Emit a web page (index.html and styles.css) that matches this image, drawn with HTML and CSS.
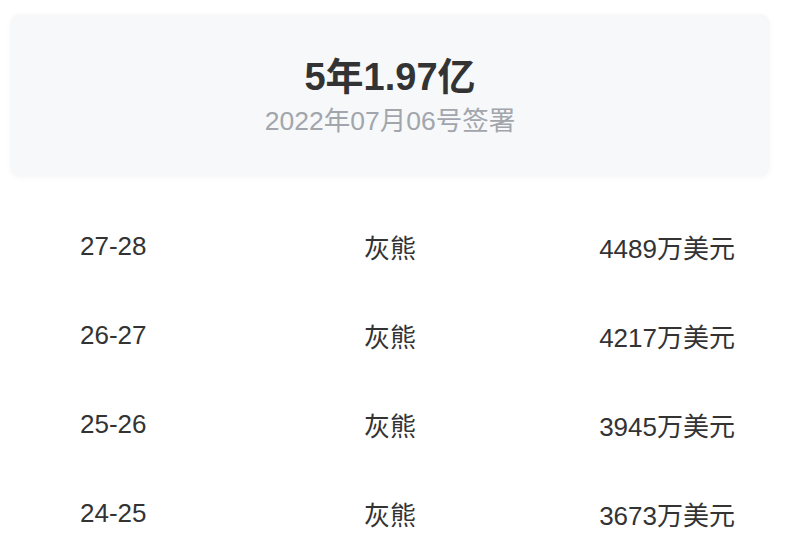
FILE: index.html
```html
<!DOCTYPE html>
<html lang="zh-CN">
<head>
    <meta charset="UTF-8">
    <meta name="viewport" content="width=device-width, initial-scale=1.0">
    <title>合同详情</title>
    <link rel="stylesheet" href="styles.css">
</head>
<body>
    <div class="page">
        <div class="contract-card">
            <h1 class="contract-total">5年1.97亿</h1>
            <p class="contract-date">2022年07月06号签署</p>
        </div>
        <div class="salary-list">
            <div class="salary-row">
                <span class="season">27-28</span>
                <span class="team">灰熊</span>
                <span class="amount">4489万美元</span>
            </div>
            <div class="salary-row">
                <span class="season">26-27</span>
                <span class="team">灰熊</span>
                <span class="amount">4217万美元</span>
            </div>
            <div class="salary-row">
                <span class="season">25-26</span>
                <span class="team">灰熊</span>
                <span class="amount">3945万美元</span>
            </div>
            <div class="salary-row">
                <span class="season">24-25</span>
                <span class="team">灰熊</span>
                <span class="amount">3673万美元</span>
            </div>
        </div>
    </div>
</body>
</html>
```

FILE: styles.css
```css
body {
    font-family: "Liberation Sans", "Noto Sans CJK SC", sans-serif;
    margin: 0;
    padding: 0;
    background: #fff;
    color: #333;
}
.page {
    width: 760px;
    padding: 14px 30px 0 10px;
}
.contract-card {
    background: #f6f8fa;
    border-radius: 10px;
    padding: 41px 0 38px 0;
    text-align: center;
    box-shadow: 0 1px 6px rgba(0,0,0,0.03);
}
.contract-total {
    font-size: 38px;
    line-height: 44px;
    font-weight: 700;
    margin: 0;
    color: #333;
}
.contract-date {
    font-size: 26.5px;
    line-height: 36px;
    margin: 4px 0 0 0;
    color: #a2a6ac;
}
.salary-list {
    margin-top: 25px;
}
.salary-row {
    display: grid;
    grid-template-columns: 1fr 1fr 1fr;
    height: 89px;
    align-items: center;
    font-size: 26px;
    color: #333;
}
.season {
    padding-left: 70px;
}
.team {
    text-align: center;
}
.amount {
    text-align: right;
    padding-right: 35px;
}
```
